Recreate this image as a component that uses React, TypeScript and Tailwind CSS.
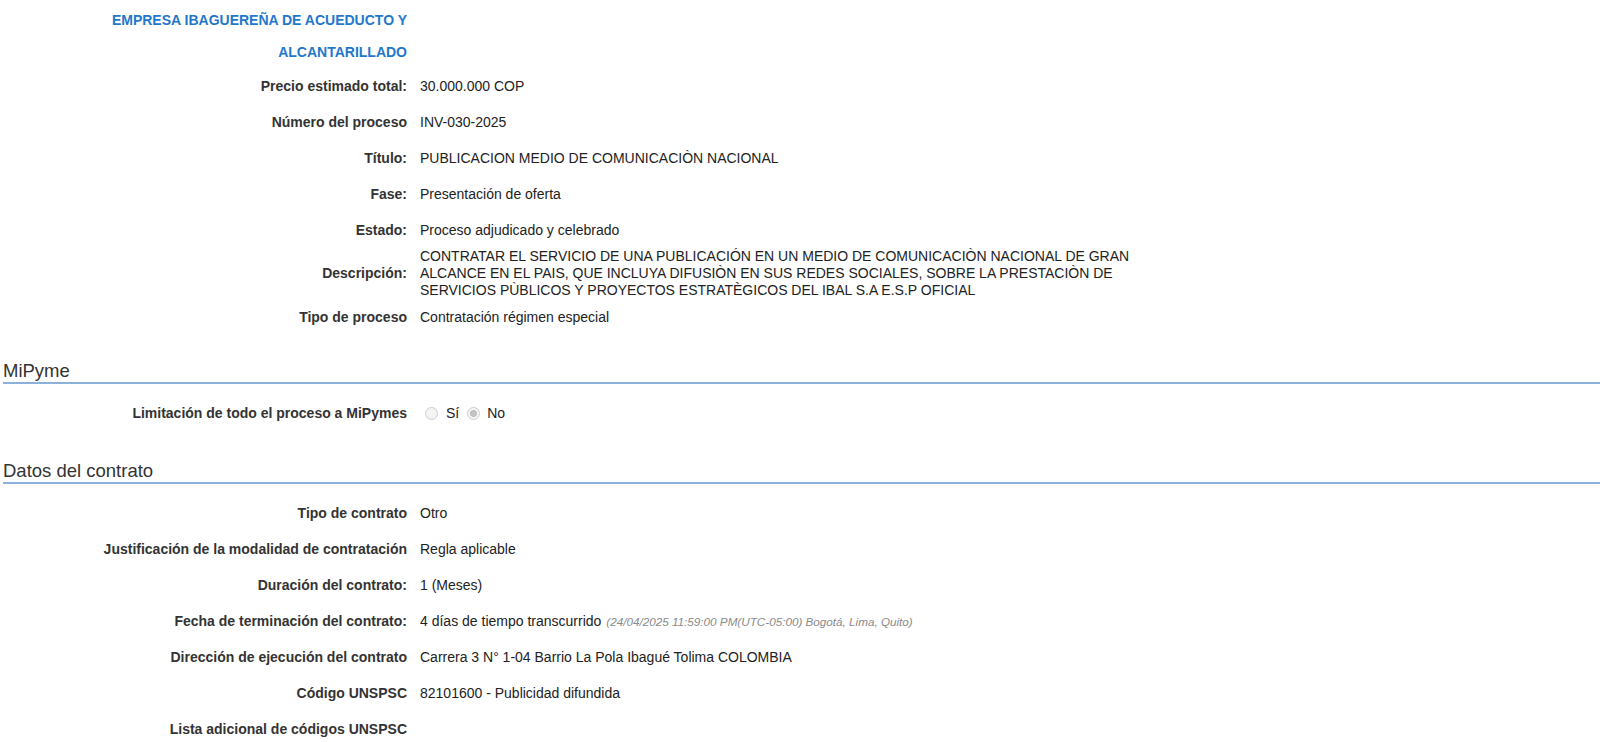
import React from 'react';

type Row = { label: string; value?: React.ReactNode };

const generalRows: Row[] = [
  { label: 'Precio estimado total:', value: '30.000.000 COP' },
  { label: 'Número del proceso', value: 'INV-030-2025' },
  { label: 'Título:', value: 'PUBLICACION MEDIO DE COMUNICACIÒN NACIONAL' },
  { label: 'Fase:', value: 'Presentación de oferta' },
  { label: 'Estado:', value: 'Proceso adjudicado y celebrado' },
];

const contractRows: Row[] = [
  { label: 'Tipo de contrato', value: 'Otro' },
  { label: 'Justificación de la modalidad de contratación', value: 'Regla aplicable' },
  { label: 'Duración del contrato:', value: '1 (Meses)' },
  {
    label: 'Fecha de terminación del contrato:',
    value: (
      <>
        4 días de tiempo transcurrido
        <span className="ml-[5px] text-[11.7px] italic text-[#8a8a8a]">
          (24/04/2025 11:59:00 PM(UTC-05:00) Bogotá, Lima, Quito)
        </span>
      </>
    ),
  },
  { label: 'Dirección de ejecución del contrato', value: 'Carrera 3 N° 1-04 Barrio La Pola Ibagué Tolima COLOMBIA' },
  { label: 'Código UNSPSC', value: '82101600 - Publicidad difundida' },
  { label: 'Lista adicional de códigos UNSPSC' },
];

const Field = ({ label, value }: Row) => (
  <div className="flex min-h-[36px] items-center">
    <div className="w-[407px] shrink-0 text-right font-bold text-[#333]">{label}</div>
    <div className="ml-[13px] text-[#222]">{value}</div>
  </div>
);

const SectionTitle = ({ title, className }: { title: string; className: string }) => (
  <div className={`ml-[3px] border-b-2 border-[#8cb2dc] text-[18.5px] leading-[22px] text-[#333] ${className}`}>
    {title}
  </div>
);

const Radio = ({ checked }: { checked?: boolean }) => (
  <span className="flex h-[13px] w-[13px] items-center justify-center rounded-full border border-[#cfcfcf] bg-[#f4f4f4]">
    {checked && <span className="h-[7px] w-[7px] rounded-full border border-[#b5b5b5] bg-[#c4c4c4]" />}
  </span>
);

export default function App() {
  return (
    <div className="min-h-screen bg-white pt-[4px] text-[14px] leading-[17px] font-['Liberation_Sans',Arial,sans-serif]">
      {/* Entity name */}
      <div className="w-[407px] text-right font-bold leading-[32px] text-[#1f78cc]">
        EMPRESA IBAGUEREÑA DE ACUEDUCTO Y
        <br />
        ALCANTARILLADO
      </div>

      {generalRows.map((r) => (
        <Field key={r.label} {...r} />
      ))}

      <div className="flex items-center">
        <div className="w-[407px] shrink-0 text-right font-bold text-[#333]">Descripción:</div>
        <div className="ml-[13px] text-[#222]">
          CONTRATAR EL SERVICIO DE UNA PUBLICACIÓN EN UN MEDIO DE COMUNICACIÒN NACIONAL DE GRAN
          <br />
          ALCANCE EN EL PAIS, QUE INCLUYA DIFUSIÒN EN SUS REDES SOCIALES, SOBRE LA PRESTACIÒN DE
          <br />
          SERVICIOS PÙBLICOS Y PROYECTOS ESTRATÈGICOS DEL IBAL S.A E.S.P OFICIAL
        </div>
      </div>

      <Field label="Tipo de proceso" value="Contratación régimen especial" />

      <SectionTitle title="MiPyme" className="mt-[25px] mb-[11px]" />
      <Field
        label="Limitación de todo el proceso a MiPymes"
        value={
          <div className="ml-[5px] flex items-center text-[#222]">
            <Radio />
            <span className="ml-[8px]">Sí</span>
            <span className="ml-[8px]">
              <Radio checked />
            </span>
            <span className="ml-[7px]">No</span>
          </div>
        }
      />

      <SectionTitle title="Datos del contrato" className="mt-[29px] mb-[11px]" />
      {contractRows.map((r) => (
        <Field key={r.label} {...r} />
      ))}
    </div>
  );
}
